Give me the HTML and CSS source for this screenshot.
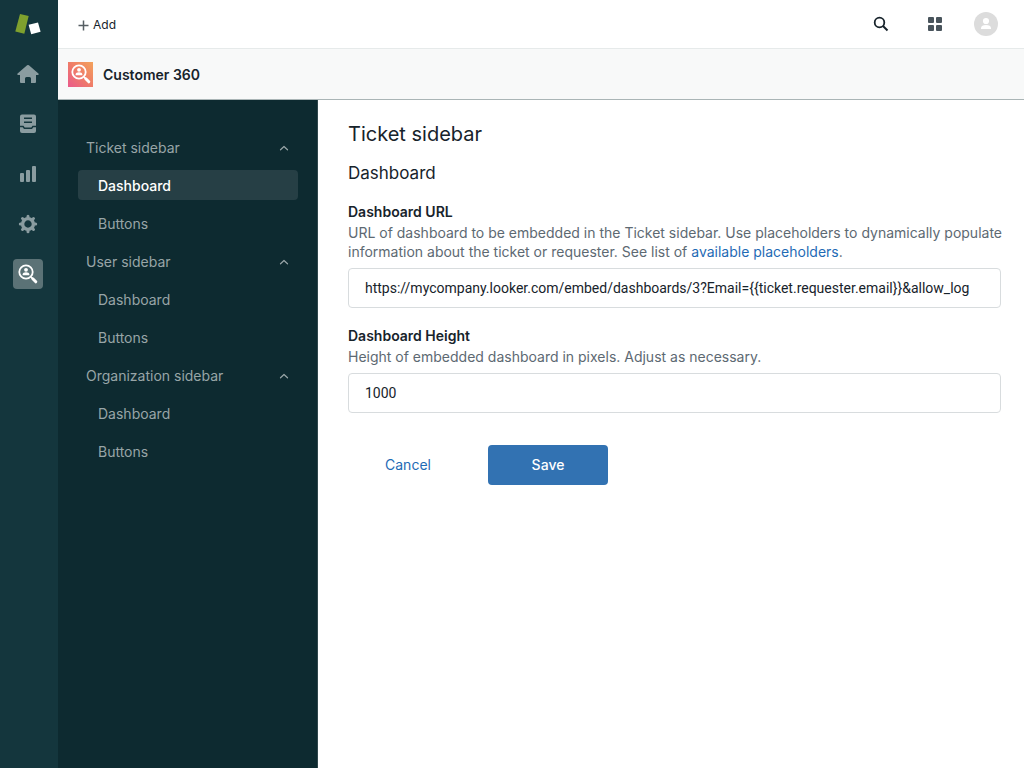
FILE: index.html
```html
<!DOCTYPE html>
<html lang="en">
<head>
<meta charset="utf-8">
<meta name="viewport" content="width=device-width, initial-scale=1">
<title>Customer 360</title>
<link rel="stylesheet" href="styles.css">
</head>
<body>
<svg class="defs" width="0" height="0" aria-hidden="true">
  <defs>
    <symbol id="customer-lens" viewBox="0 0 20 20">
      <circle cx="8" cy="8" r="6.700" fill="none" stroke="currentColor" stroke-width="1.800"/>
      <circle cx="8" cy="5.800" r="1.900" fill="currentColor"/>
      <path d="M4.600 11.200V10.400C4.600 8.900 6 8.200 8 8.200s3.400.7 3.400 2.200v.8z" fill="currentColor"/>
      <path d="M13 13l1.600 1.600" stroke="currentColor" stroke-width="1.600"/>
      <path d="M14.800 14.800l3 3" stroke="currentColor" stroke-width="3" stroke-linecap="round"/>
    </symbol>
    <symbol id="chevron" viewBox="0 0 10 6">
      <path d="M1.500 4.800L5 1.500l3.500 3.300" fill="none" stroke="currentColor" stroke-width="1.200" stroke-linecap="round" stroke-linejoin="round"/>
    </symbol>
  </defs>
</svg>
<div class="app">
  <nav class="rail" aria-label="Products">
    <a class="rail-item" href="#" aria-label="Start">
      <svg width="26" height="22" viewBox="0 0 26 22">
        <path d="M5 1L13.700 3 9.300 20.800 .3 18.600z" fill="#7fa12e"/>
        <path d="M13.600 11.800L23 9.400 25.600 18.700 16.200 21.200z" fill="#fff"/>
      </svg>
    </a>
    <a class="rail-item" href="#" aria-label="Home">
      <svg width="22" height="18" viewBox="0 0 22 18">
        <path d="M9.800.5a1.800 1.800 0 0 1 2.400 0l9.200 8.100c.6.6.3 1.400-.5 1.400H19v7a1 1 0 0 1-1 1h-4v-4.500a1.500 1.500 0 0 0-1.500-1.500h-3A1.500 1.500 0 0 0 8 13.500V18H4a1 1 0 0 1-1-1v-7H1.100C.3 10 0 9.200.6 8.600z" fill="currentColor"/>
      </svg>
    </a>
    <a class="rail-item" href="#" aria-label="Views">
      <svg width="18" height="20" viewBox="0 0 18 20">
        <path fill-rule="evenodd" d="M3 .5h12a2 2 0 0 1 2 2v9.300h-3.500L12.300 13.400H5.700L4.500 11.800H1V2.500a2 2 0 0 1 2-2zM5 3.500v1.400h8V3.500zM5 7.500v1.400h8V7.500z" fill="currentColor"/>
        <path d="M1 13.200h2.700L5 15h8l1.300-1.800H17V17a2 2 0 0 1-2 2H3a2 2 0 0 1-2-2z" fill="currentColor"/>
      </svg>
    </a>
    <a class="rail-item" href="#" aria-label="Reporting">
      <svg width="18" height="18" viewBox="0 0 18 18" fill="currentColor">
        <rect x="1" y="8" width="4" height="9" rx="1"/>
        <rect x="7" y="5" width="4" height="12" rx="1"/>
        <rect x="13" y="1" width="4" height="16" rx="1"/>
      </svg>
    </a>
    <a class="rail-item" href="#" aria-label="Admin">
      <svg width="20" height="20" viewBox="-10 -10 20 20">
        <circle r="5.400" fill="none" stroke="currentColor" stroke-width="3.400"/>
        <g stroke="currentColor" stroke-width="3" stroke-linecap="round">
          <path d="M0-6.500V-7.700M0 6.500V7.700M-6.500 0H-7.700M6.500 0H7.700"/>
          <path d="M-4.700-4.700L-5.500-5.500M4.700-4.700L5.500-5.500M-4.700 4.700L-5.500 5.500M4.700 4.700L5.500 5.500"/>
        </g>
      </svg>
    </a>
    <a class="rail-item" href="#" aria-label="Customer 360" aria-current="page">
      <span class="rail-current"><svg width="20" height="20"><use href="#customer-lens"/></svg></span>
    </a>
  </nav>

  <div class="workspace">
    <header class="topbar">
      <button class="add" type="button">
        <svg width="11" height="11" viewBox="0 0 11 11"><path d="M5.500 .5v10M.5 5.500h10" stroke="#565e63" stroke-width="1.500"/></svg>
        Add
      </button>
      <div class="tools">
        <button class="tool" type="button" aria-label="Search">
          <svg width="16" height="16" viewBox="0 0 16 16" fill="none" stroke="#17232b"><circle cx="6.500" cy="6.500" r="4.800" stroke-width="1.800"/><path d="M10 10l4.500 4.500" stroke-width="2"/></svg>
        </button>
        <button class="tool" type="button" aria-label="Apps">
          <svg width="14" height="14" viewBox="0 0 14 14" fill="#49545c"><rect width="6" height="6" rx="1"/><rect x="8" width="6" height="6" rx="1"/><rect y="8" width="6" height="6" rx="1"/><rect x="8" y="8" width="6" height="6" rx="1"/></svg>
        </button>
        <button class="profile" type="button" aria-label="Profile">
          <svg width="24" height="24" viewBox="0 0 24 24"><circle cx="12" cy="12" r="12" fill="#dcdcdc"/><circle cx="12" cy="9" r="3.100" fill="#fff"/><path d="M7 17v-.7C7 14 9 13 12 13s5 1 5 3.300v.7z" fill="#fff"/></svg>
        </button>
      </div>
    </header>

    <div class="appbar">
      <span class="app-icon"><svg width="20" height="20"><use href="#customer-lens"/></svg></span>
      <span class="app-name">Customer 360</span>
    </div>

    <div class="body">
      <nav class="sidebar" aria-label="Settings">
        <button class="group" type="button" aria-expanded="true">Ticket sidebar <svg width="10" height="6"><use href="#chevron"/></svg></button>
        <a class="entry current" href="#" aria-current="page">Dashboard</a>
        <a class="entry" href="#">Buttons</a>
        <button class="group" type="button" aria-expanded="true">User sidebar <svg width="10" height="6"><use href="#chevron"/></svg></button>
        <a class="entry" href="#">Dashboard</a>
        <a class="entry" href="#">Buttons</a>
        <button class="group" type="button" aria-expanded="true">Organization sidebar <svg width="10" height="6"><use href="#chevron"/></svg></button>
        <a class="entry" href="#">Dashboard</a>
        <a class="entry" href="#">Buttons</a>
      </nav>

      <main class="content">
        <h1 class="title">Ticket sidebar</h1>
        <h2 class="subtitle">Dashboard</h2>
        <form class="form">
          <div class="field">
            <label class="label" for="url">Dashboard URL</label>
            <p class="hint" id="url-hint">URL of dashboard to be embedded in the Ticket sidebar. Use placeholders to dynamically populate information about the ticket or requester. See list of <a class="link" href="#">available placeholders</a>.</p>
            <input class="input" id="url" type="text" aria-describedby="url-hint" value="https://mycompany.looker.com/embed/dashboards/3?Email={{ticket.requester.email}}&amp;allow_log">
          </div>
          <div class="field">
            <label class="label" for="height">Dashboard Height</label>
            <p class="hint" id="height-hint">Height of embedded dashboard in pixels. Adjust as necessary.</p>
            <input class="input" id="height" type="text" aria-describedby="height-hint" value="1000">
          </div>
          <div class="actions">
            <button class="button" type="button">Cancel</button>
            <button class="button primary" type="submit">Save</button>
          </div>
        </form>
      </main>
    </div>
  </div>
</div>
</body>
</html>
```
FILE: styles.css
```css
* { box-sizing: border-box; }

body {
  margin: 0;
  font: 14px/20px Inter, "Liberation Sans", sans-serif;
  color: #17232b;
  background: #fff;
}

button {
  font: inherit;
  color: inherit;
  background: none;
  border: 0;
  padding: 0;
}

a { text-decoration: none; }
svg { display: block; flex: none; }
.defs { position: absolute; }

.app {
  display: flex;
  min-height: 100vh;
}

.rail {
  flex: none;
  width: 58px;
  padding-right: 2px;
  background: #14363d;
}

.rail-item {
  display: flex;
  align-items: center;
  justify-content: center;
  height: 50px;
  padding-bottom: 2px;
  color: #8a9ca0;
}

.rail-current {
  display: flex;
  align-items: center;
  justify-content: center;
  width: 30px;
  height: 30px;
  border-radius: 4px;
  color: #fff;
  background: #5b7276;
}

.workspace {
  flex: 1;
  min-width: 0;
  display: flex;
  flex-direction: column;
}

.topbar {
  display: flex;
  align-items: center;
  justify-content: space-between;
  height: 49px;
  padding: 0 26px 0 20px;
  border-bottom: 1px solid #e6eaea;
}

.add {
  display: flex;
  align-items: center;
  gap: 4px;
  padding-top: 2px;
  font-size: 12px;
}

.tools {
  display: flex;
  gap: 24px;
}

.tool {
  display: flex;
  align-items: center;
  justify-content: center;
  width: 30px;
  height: 24px;
}

.appbar {
  display: flex;
  align-items: center;
  gap: 10px;
  height: 51px;
  padding: 0 10px;
  background: #f8f9f9;
  border-bottom: 1px solid #aab5b6;
}

.app-icon {
  display: flex;
  align-items: center;
  justify-content: center;
  width: 25px;
  height: 25px;
  color: #fff;
  background: linear-gradient(to top right, #ea5a8c, #ef7c68 50%, #f3a35c);
}

.app-name {
  padding-top: 2px;
  font-weight: 600;
}

.body {
  flex: 1;
  display: flex;
}

.sidebar {
  flex: none;
  display: flex;
  flex-direction: column;
  gap: 8px;
  width: 260px;
  padding: 32px 19px 32px 20px;
  color: #98a5a7;
  background: #0d2a30;
  border-right: 1px solid #2f474c;
}

.group {
  display: flex;
  align-items: center;
  justify-content: space-between;
  height: 30px;
  padding: 2px 9px 0 8px;
}

.entry {
  height: 30px;
  padding: 0 20px;
  line-height: 32px;
  color: inherit;
  border-radius: 4px;
}

.current {
  font-weight: 500;
  color: #fff;
  background: #263f45;
}

.content {
  flex: 1;
  min-width: 0;
  padding: 20px 23px 20px 30px;
}

.title {
  margin: 0;
  font-size: 20px;
  font-weight: 400;
  line-height: 28px;
}

.subtitle {
  margin: 13px 0 17px;
  font-size: 17px;
  font-weight: 400;
  line-height: 24px;
}

.form {
  display: flex;
  flex-direction: column;
  gap: 18px;
}

.field {
  display: flex;
  flex-direction: column;
}

.label { font-weight: 600; }

.hint {
  margin: 1px -12px 7px 0;
  line-height: 19px;
  color: #5d6972;
}

.link { color: #1f6bb5; }

.input {
  width: 100%;
  height: 40px;
  padding: 0 16px;
  font: 14px/20px Roboto, "Liberation Sans", sans-serif;
  color: inherit;
  background: #fff;
  border: 1px solid #d8dcde;
  border-radius: 4px;
}

.actions {
  display: flex;
  gap: 20px;
  padding-top: 14px;
}

.button {
  width: 120px;
  height: 40px;
  color: #1f6bb5;
  border-radius: 4px;
}

.primary {
  font-weight: 500;
  color: #fff;
  background: #3272b2;
}
```
